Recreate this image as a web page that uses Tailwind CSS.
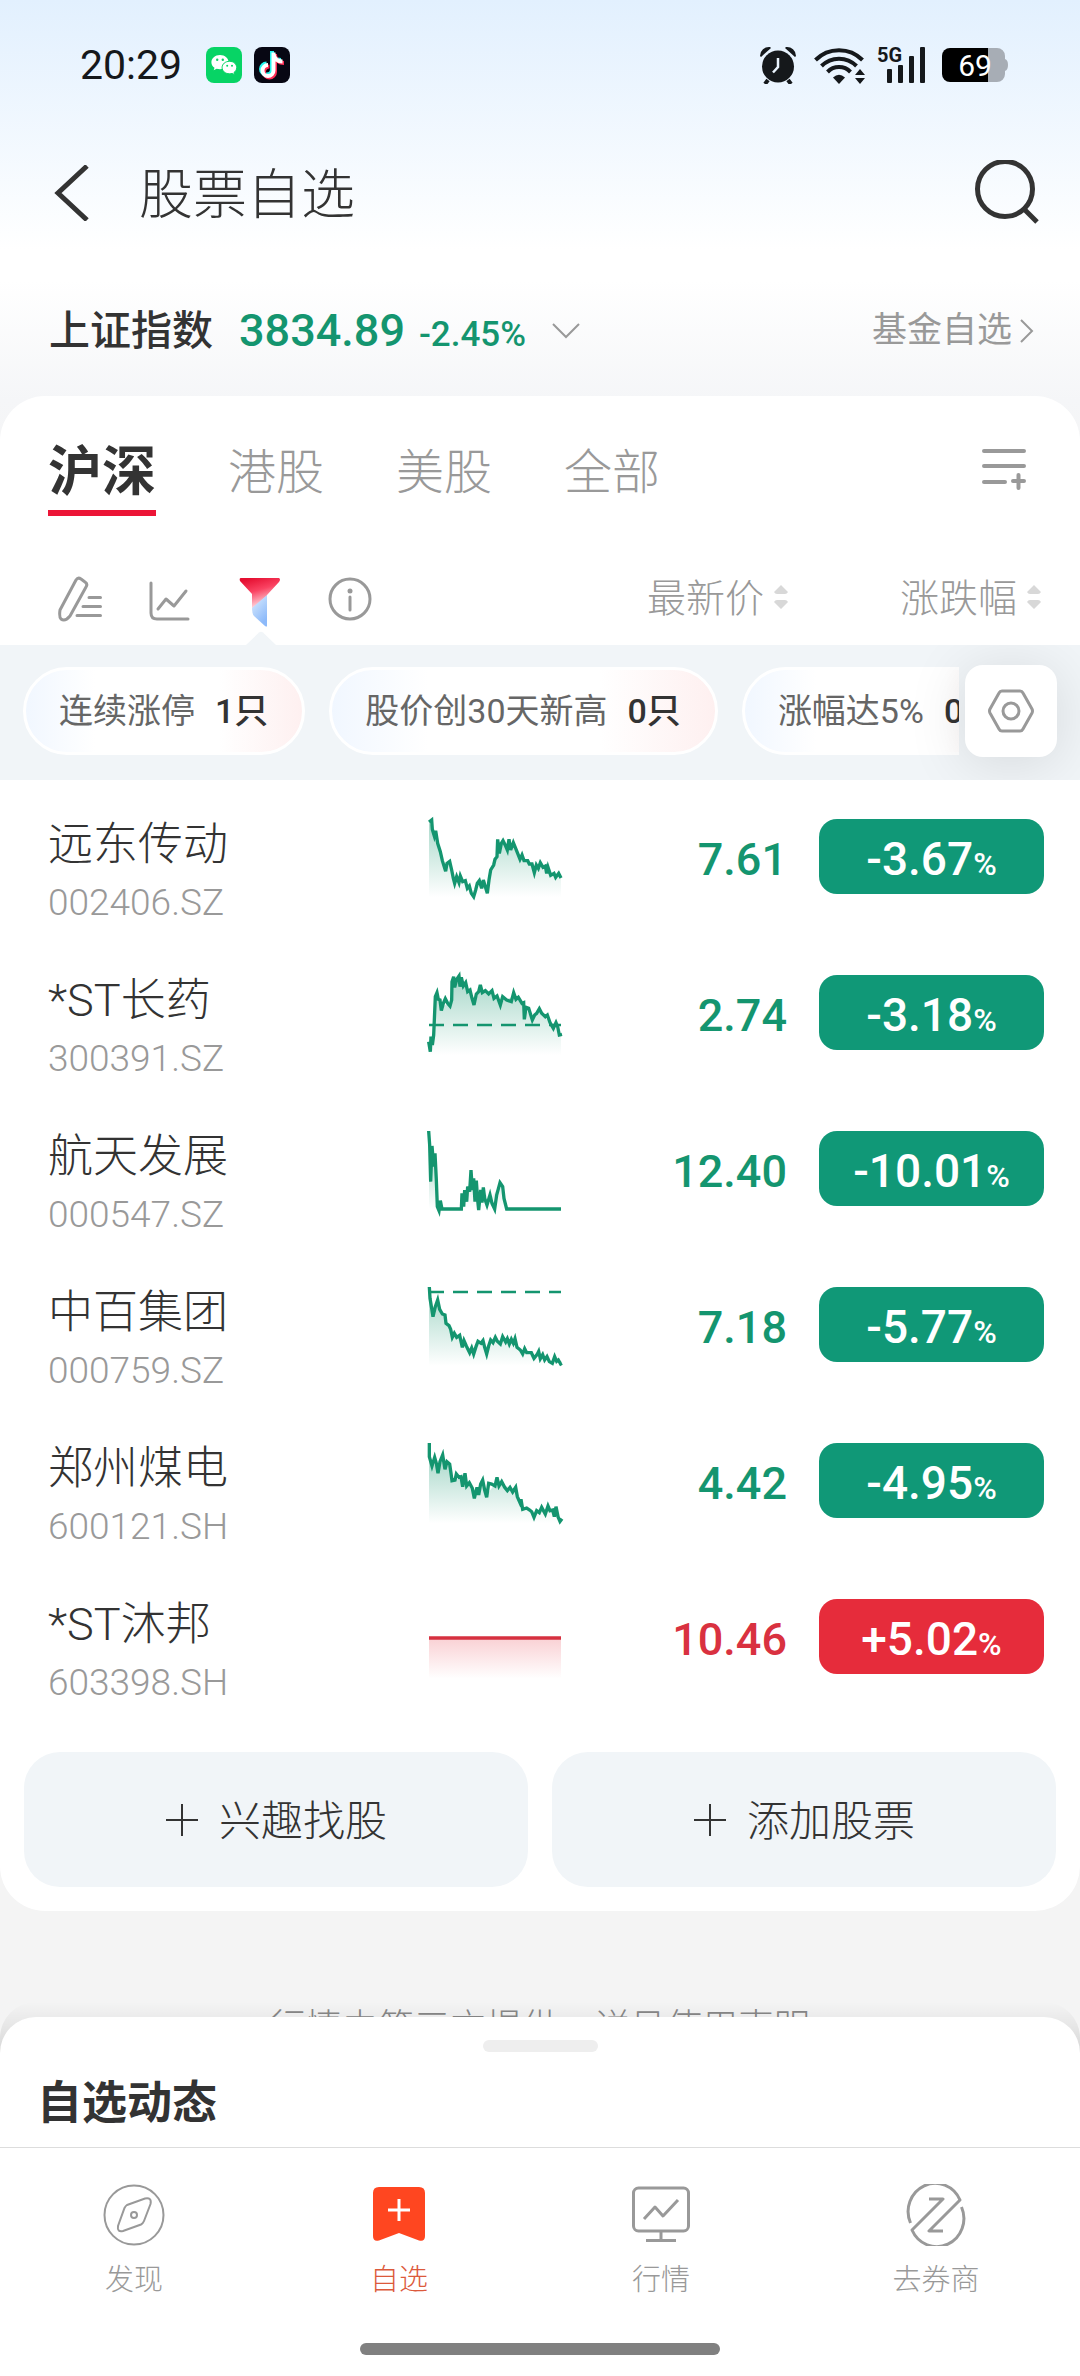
<!DOCTYPE html>
<html lang="zh-CN">
<head>
<meta charset="utf-8">
<meta name="viewport" content="width=device-width, initial-scale=1">
<title>股票自选</title>
<script src="https://cdn.jsdelivr.net/npm/@tailwindcss/browser@4"></script>
</head>
<body class="font-['Roboto','Noto_Sans_CJK_SC',sans-serif] text-[#333] bg-white">
<div class="h-screen flex flex-col overflow-hidden">

  <div class="flex-1 min-h-0 overflow-y-auto [scrollbar-width:none] bg-[linear-gradient(to_bottom,#e2f0fe_0px,#ffffff_250px,#ffffff_280px,#f5f6f8_400px,#f4f4f4_480px)]">

    <!-- Status bar -->
    <div class="h-[130px] flex items-center pl-20 pr-[72px] text-[#15181b]">
      <span class="text-[41px] leading-[48px]">20:29</span>
      <svg class="ml-6 size-9" viewBox="0 0 36 36" aria-hidden="true">
        <rect width="36" height="36" rx="8" fill="#07d465"/>
        <path d="M14 8c-5 0-8.600 3.300-8.600 7.300 0 2.300 1.200 4.200 3.100 5.500l-.8 2.500 2.900-1.500c1.100.3 2.200.5 3.400.5 5 0 8.600-3.100 8.600-7S19 8 14 8z" fill="#fff"/>
        <path d="M23.500 14.300c-4.300 0-7.400 2.800-7.400 6.300 0 3.400 3.100 6.200 7.400 6.200 1 0 1.900-.1 2.700-.4l2.500 1.300-.7-2.200c1.700-1.200 2.700-2.900 2.700-4.900 0-3.500-3-6.300-7.200-6.300z" fill="#fff" stroke="#07d465"/>
        <g fill="#07d465"><circle cx="11.200" cy="12.800" r="1.200"/><circle cx="16.800" cy="12.800" r="1.200"/><circle cx="21.200" cy="18.800" r="1"/><circle cx="26" cy="18.800" r="1"/></g>
      </svg>
      <svg class="ml-3 size-9" viewBox="0 0 36 36" fill="none" stroke-width="4" aria-hidden="true">
        <rect width="36" height="36" rx="8" fill="#070713"/>
        <path d="M19 5v18a5.500 5.500 0 1 1-5.500-5.500M19 6c.5 5 4 8 9 8" stroke="#25f4ee" transform="translate(-1 -1)"/>
        <path d="M19 5v18a5.500 5.500 0 1 1-5.500-5.500M19 6c.5 5 4 8 9 8" stroke="#fe2c55" transform="translate(2 2)"/>
        <path d="M19 5v18a5.500 5.500 0 1 1-5.500-5.500M19 6c.5 5 4 8 9 8" stroke="#fff" transform="translate(.5 .5)"/>
      </svg>
      <svg class="ml-auto w-[38px] h-[38px]" viewBox="0 0 38 38" aria-hidden="true">
        <circle cx="19" cy="20.500" r="16" fill="currentColor"/>
        <path d="M1 10A9 9 0 0 1 11 1L12 2L2 11ZM37 10A9 9 0 0 0 27 1L26 2L36 11Z" fill="currentColor"/>
        <path d="M9 34l-3 4M29 34l3 4" stroke="currentColor" stroke-width="4"/>
        <path d="M19 12v9l-5 5.500" fill="none" stroke="#eaf4fe" stroke-width="2.500"/>
      </svg>
      <svg class="ml-[17px] w-[51px] h-[38px]" viewBox="0 0 51 38" fill="none" stroke="currentColor" stroke-width="4" aria-hidden="true">
        <path d="M1.500 14A33 33 0 0 1 48.500 14M7.500 20A24.500 24.500 0 0 1 42.500 20M13.500 26A16 16 0 0 1 36.500 26"/>
        <path d="M25 38l-6-6.500q6-5.500 12 0z" fill="currentColor" stroke="none"/>
        <path d="M41 29l5-6 5 6zM41 32l5 6 5-6z" fill="currentColor" stroke="none"/>
      </svg>
      <div class="relative ml-3 w-[50px] h-[38px]">
        <span class="absolute left-0 top-0 text-xl leading-[18px] font-bold">5G</span>
        <svg class="w-[50px] h-[38px]" viewBox="0 0 50 38" fill="currentColor" aria-hidden="true">
          <rect x="10" y="23" width="5" height="14" rx="1"/><rect x="21" y="19" width="5" height="18" rx="1"/><rect x="32" y="10" width="5" height="27" rx="1"/><rect x="43" y="1" width="5" height="36" rx="1"/>
        </svg>
      </div>
      <div class="relative ml-[15px] w-[66px] h-[34px]">
        <svg class="w-[66px] h-[34px]" viewBox="0 0 66 34" aria-hidden="true">
          <path d="M46 0h9a8 8 0 0 1 8 8v3q3 1 3 6t-3 6v3a8 8 0 0 1-8 8h-9z" fill="#a7adb5"/>
          <path d="M46 0H8a8 8 0 0 0-8 8v18a8 8 0 0 0 8 8h38z" fill="#000"/>
        </svg>
        <span class="absolute inset-0 text-center text-[30px] leading-[36px] text-white">69</span>
      </div>
    </div>

    <!-- Title bar -->
    <header class="h-[126px] flex items-center pl-[54px] pr-10">
      <button aria-label="返回"><svg class="block w-9 h-14" viewBox="0 0 36 56" fill="none" stroke="#333" stroke-width="5"><path d="M33 1L4 28L33 55"/></svg></button>
      <h1 class="ml-[49px] pt-1.5 text-[54px] leading-[64px] font-light">股票自选</h1>
      <button class="ml-auto" aria-label="搜索"><svg class="block size-[66px]" viewBox="0 0 66 66" fill="none" stroke="#333" stroke-width="5"><circle cx="31" cy="29" r="27.500"/><path d="M49 48L63 62"/></svg></button>
    </header>

    <!-- Index summary -->
    <section class="h-[140px] flex items-center pt-2.5 pl-[49px] pr-[46px]">
      <button class="flex items-center">
        <span class="text-[41px] leading-[50px] font-medium">上证指数</span>
        <span class="ml-[26px] flex items-baseline gap-3.5 pt-1 text-[#14956f] font-medium">
          <span class="text-[45px] leading-[54px]">3834.89</span>
          <span class="text-[35px]">-2.45%</span>
        </span>
        <svg class="ml-[26px] w-7 h-4" viewBox="0 0 28 16" fill="none" stroke="#999" stroke-width="2"><path d="M1 1L14 14L27 1"/></svg>
      </button>
      <a href="#" class="ml-auto flex items-center gap-2 text-[35px] text-[#999]">基金自选
        <svg class="w-[14px] h-6" viewBox="0 0 14 24" fill="none" stroke="#999" stroke-width="2"><path d="M1 1L12 12L1 23"/></svg>
      </a>
    </section>

    <main class="bg-white rounded-[45px] overflow-hidden">
      <!-- Market tabs -->
      <nav class="flex items-end pt-[50px] pl-12 pr-[54px]">
        <div class="flex gap-[72px] text-5xl leading-[54px] font-light text-[#999]">
          <button class="pb-2.5 border-b-6 border-[#ec1537] text-[54px] leading-[54px] font-bold text-[#333]">沪深</button>
          <button class="pb-4 leading-[54px]">港股</button>
          <button class="pb-4 leading-[54px]">美股</button>
          <button class="pb-4 leading-[54px]">全部</button>
        </div>
        <button class="ml-auto pb-[26px]" aria-label="管理分组"><svg class="block w-11 h-[42px]" viewBox="0 0 44 42" fill="none" stroke="#999" stroke-width="4" stroke-linecap="round"><path d="M2 3H42M2 18H42M2 34H23M31 33H42M36.500 27V40"/></svg></button>
      </nav>

      <!-- Toolbar and sort headings -->
      <div class="relative h-[129px] pt-9 pl-14 pr-[39px] flex items-center text-[#999]">
        <div class="flex gap-[42px]">
          <button aria-label="编辑"><svg class="block size-12" viewBox="0 0 48 48" fill="none" stroke="currentColor" stroke-width="3" stroke-linecap="round" stroke-linejoin="round"><path d="M20 5Q22 2 25 4L29 7Q32 9 30 12L14 41Q9 47 5 44Q3 42 4 35Z"/><path d="M33 22.500H44.500M27 31.500H44.500M21 40.500H44.500"/></svg></button>
          <button aria-label="走势"><svg class="block size-12" viewBox="0 0 48 48" fill="none" stroke="currentColor" stroke-width="3" stroke-linecap="round" stroke-linejoin="round"><path d="M5 8V38Q5 44 11 44H42"/><path d="M12 34L20 24L28 31L40 16"/></svg></button>
          <button aria-label="筛选"><svg class="block size-12 overflow-visible" viewBox="0 0 48 48">
            <defs><linearGradient id="fr" x1="0.300" y1="0" x2="0.700" y2="1"><stop offset="0" stop-color="#e50f31"/><stop offset=".4" stop-color="#fa4362"/><stop offset="1" stop-color="#fff"/></linearGradient><linearGradient id="fb" x1="0" y1="0" x2="0.500" y2="1"><stop offset="0" stop-color="#e4f2fe"/><stop offset="1" stop-color="#8dbafa"/></linearGradient></defs>
            <path d="M31 17V51Q31 52 29 51L18 41Q16 39 16 32Z" fill="url(#fb)"/><path d="M5 3H43Q45 4 43 7L31 20L16 33V19L4 6Q3 3 5 3Z" fill="url(#fr)"/></svg></button>
          <button aria-label="说明"><svg class="block size-12" viewBox="0 0 48 48" fill="none" stroke="currentColor" stroke-width="3" stroke-linecap="round"><circle cx="24" cy="24" r="20"/><path d="M24 22V35"/><circle cx="24" cy="16" r="2.500" fill="currentColor" stroke="none"/></svg></button>
        </div>
        <div class="ml-auto flex gap-[112px] text-[39px] leading-[46px] font-light">
          <button class="flex items-center gap-2.5">最新价<svg class="mb-1 w-[14px] h-6" viewBox="0 0 14 24" fill="#d8d8d8"><path d="M7 0L14 7Q13 9 11 9H3Q1 9 0 7ZM7 24L14 17Q13 15 11 15H3Q1 15 0 17Z"/></svg></button>
          <button class="flex items-center gap-2.5">涨跌幅<svg class="mb-1 w-[14px] h-6" viewBox="0 0 14 24" fill="#d8d8d8"><path d="M7 0L14 7Q13 9 11 9H3Q1 9 0 7ZM7 24L14 17Q13 15 11 15H3Q1 15 0 17Z"/></svg></button>
        </div>
        <svg class="absolute left-[246px] bottom-0 w-[30px] h-[14px]" viewBox="0 0 30 14" fill="#f1f5f8" aria-hidden="true"><path d="M0 14L13 1.500Q15 0 17 1.500L30 14Z"/></svg>
      </div>

      <!-- Quick filters -->
      <div class="h-[135px] bg-[#f1f5f8] overflow-hidden flex items-center pb-[3px] pl-[23px] pr-[23px] gap-[6px]">
        <div class="flex-1 min-w-0 overflow-hidden flex gap-6 text-[34px] leading-[42px] text-[#666]">
          <button class="shrink-0 h-[88px] rounded-full border-3 border-white pl-[33px] pr-[34px] flex items-center gap-5 bg-[linear-gradient(to_right,#f1f7ff,#ffffff_25%,#ffffff_70%,#fef0f0)]">连续涨停<b class="font-medium text-[#333]">1只</b></button>
          <button class="shrink-0 h-[88px] rounded-full border-3 border-white pl-[33px] pr-[34px] flex items-center gap-5 bg-[linear-gradient(to_right,#f1f7ff,#ffffff_25%,#ffffff_70%,#fef0f0)]">股价创30天新高<b class="font-medium text-[#333]">0只</b></button>
          <button class="shrink-0 h-[88px] rounded-full border-3 border-white pl-[33px] pr-[34px] flex items-center gap-5 bg-[linear-gradient(to_right,#f1f7ff,#ffffff_25%,#ffffff_70%,#fef0f0)]">涨幅达5%<b class="font-medium text-[#333]">0只</b></button>
        </div>
        <button class="relative shrink-0 size-[92px] rounded-[18px] bg-white shadow-[0_6px_60px_rgba(0,0,0,0.12)] flex items-center justify-center" aria-label="筛选设置">
          <svg class="size-12" viewBox="0 0 48 48" fill="none" stroke="#999" stroke-width="3" stroke-linejoin="round"><path d="M15 4H33Q35 4 36 6L45 22Q46 24 45 26L36 42Q35 44 33 44H15Q13 44 12 42L3 26Q2 24 3 22L12 6Q13 4 15 4Z"/><circle cx="24" cy="24" r="8"/></svg>
        </button>
      </div>

      <!-- Watchlist -->
      <svg class="absolute size-0" aria-hidden="true"><defs>
        <linearGradient id="gg" x1="0" y1="0" x2="0" y2="1"><stop offset="0" stop-color="#14956f" stop-opacity=".36"/><stop offset="1" stop-color="#14956f" stop-opacity="0"/></linearGradient>
        <linearGradient id="gr" x1="0" y1="0" x2="0" y2="1"><stop offset="0" stop-color="#e62c3b" stop-opacity=".22"/><stop offset="1" stop-color="#e62c3b" stop-opacity="0"/></linearGradient>
      </defs></svg>
      <table class="w-full table-fixed border-collapse" aria-label="沪深自选">
        <colgroup><col><col class="w-[132px]"><col class="w-[226px]"><col class="w-[293px]"></colgroup>
        <tbody>
          <tr class="h-[156px]">
            <th scope="row" class="pl-12 pt-8 text-left font-light"><span class="block text-[45px] leading-[54px]">远东传动</span><span class="block mt-1 text-[37px] leading-[54px] text-[#999]">002406.SZ</span></th>
            <td><svg class="block w-[132px] h-[78px] overflow-visible" viewBox="87 87 396 234"><path fill="url(#gg)" d="M87 95L105 125L120 185L137 240L148 215L163 270L178 262L200 285L220 318L235 275L262 305L275 235L290 200L295 155L320 165L345 165L365 208L400 230L420 222L450 245L483 262V321H87Z"/><path fill="none" stroke="#14956f" stroke-width="10" d="M87 96L95 90L97 118L103 138L107 122L113 160L121 185L127 212L137 244L141 220L149 214L155 240L160 265L164 280L170 260L177 278L181 258L188 275L196 272L202 295L208 288L214 310L221 320L227 300L232 280L238 272L245 295L250 270L256 290L262 310L267 270L272 240L281 225L285 208L291 200L293 148L298 190L304 160L309 152L317 168L322 180L327 148L332 180L340 158L347 175L353 190L360 208L366 195L372 212L383 212L388 222L396 222L403 248L409 225L415 235L421 218L429 232L436 228L440 250L444 232L452 256L462 250L467 262L476 250L483 264"/></svg></td>
            <td class="pt-1 text-right text-[45px] font-medium text-[#14956f]">7.61</td>
            <td class="pl-8 pr-9 pb-[3px]"><span class="flex h-[75px] items-baseline justify-center rounded-[18px] bg-[#109877] text-[46px] leading-[80px] font-medium text-white">-3.67<span class="text-[32px]">%</span></span></td>
          </tr>
          <tr class="h-[156px]">
            <th scope="row" class="pl-12 pt-8 text-left font-light"><span class="block text-[45px] leading-[54px]">*ST长药</span><span class="block mt-1 text-[37px] leading-[54px] text-[#999]">300391.SZ</span></th>
            <td><svg class="block w-[132px] h-[78px] overflow-visible" viewBox="87 555 396 234"><path fill="url(#gg)" d="M87 740L103 735L108 610L125 650L150 640L160 570L180 570L205 600L222 640L240 600L275 605L300 635L340 620L365 640L395 685L420 665L455 705L483 735V795H87Z"/><path stroke="#14956f" stroke-width="8" stroke-dasharray="45 27" d="M87 705H483"/><path fill="none" stroke="#14956f" stroke-width="10" d="M86 755L91 785L93 740L97 765L101 735L103 690L106 620L111 608L115 628L120 630L124 662L130 640L136 626L143 640L150 648L155 630L156 575L161 560L164 592L170 568L177 558L180 590L184 562L190 588L197 578L203 605L210 600L216 625L222 645L229 612L236 605L241 585L247 608L256 602L266 612L276 602L282 625L291 618L301 645L308 620L320 630L334 635L341 608L348 628L355 622L366 640L371 638L373 688L378 652L386 655L397 690L404 675L410 670L418 656L425 670L436 680L442 675L450 698L460 715L468 698L473 710L478 735L486 733"/></svg></td>
            <td class="pt-1 text-right text-[45px] font-medium text-[#14956f]">2.74</td>
            <td class="pl-8 pr-9 pb-[3px]"><span class="flex h-[75px] items-baseline justify-center rounded-[18px] bg-[#109877] text-[46px] leading-[80px] font-medium text-white">-3.18<span class="text-[32px]">%</span></span></td>
          </tr>
          <tr class="h-[156px]">
            <th scope="row" class="pl-12 pt-8 text-left font-light"><span class="block text-[45px] leading-[54px]">航天发展</span><span class="block mt-1 text-[37px] leading-[54px] text-[#999]">000547.SZ</span></th>
            <td><svg class="block w-[132px] h-[78px] overflow-visible" viewBox="87 1023 396 234"><path fill="url(#gg)" d="M87 1080L105 1120L112 1257H87ZM185 1257L213 1160L235 1240L250 1200L270 1230L300 1185L318 1257Z"/><path fill="none" stroke="#14956f" stroke-width="10" d="M86 1023L89 1065L92 1175L96 1068L101 1130L105 1090L109 1170L112 1250L117 1262L121 1232L126 1257H184L186 1210L191 1250L194 1200L200 1235L203 1190L209 1205L213 1140L217 1200L221 1165L225 1235L229 1172L233 1230L236 1260L242 1200L246 1238L250 1192L254 1225L261 1245L270 1215L276 1240L284 1257L290 1215L300 1178L308 1190L312 1225L320 1257H483"/></svg></td>
            <td class="pt-1 text-right text-[45px] font-medium text-[#14956f]">12.40</td>
            <td class="pl-8 pr-9 pb-[3px]"><span class="flex h-[75px] items-baseline justify-center rounded-[18px] bg-[#109877] text-[46px] leading-[80px] font-medium text-white">-10.01<span class="text-[32px]">%</span></span></td>
          </tr>
          <tr class="h-[156px]">
            <th scope="row" class="pl-12 pt-8 text-left font-light"><span class="block text-[45px] leading-[54px]">中百集团</span><span class="block mt-1 text-[37px] leading-[54px] text-[#999]">000759.SZ</span></th>
            <td><svg class="block w-[132px] h-[78px] overflow-visible" viewBox="87 81 396 234"><path fill="url(#gg)" d="M87 100L99 165L113 125L135 175L157 228L180 235L210 275L245 245L260 275L285 240L340 245L365 275L400 290L440 298L483 310V318H87Z"/><path stroke="#14956f" stroke-width="8" stroke-dasharray="45 27" d="M87 96H483"/><path fill="none" stroke="#14956f" stroke-width="10" d="M88 81L90 115L95 145L99 170L106 140L113 120L119 148L127 162L135 165L138 190L147 197L152 208L157 232L163 220L170 232L179 226L187 262L192 242L199 258L209 278L215 264L221 282L228 260L234 244L243 250L249 242L254 262L260 282L266 258L272 240L279 248L286 232L292 244L301 252L308 230L317 246L322 236L328 252L334 238L340 250L345 236L351 262L361 270L368 282L374 266L380 278L394 278L402 295L411 284L416 274L421 296L428 284L434 300L441 290L448 305L457 310L464 290L470 304L475 300L482 312L486 310"/></svg></td>
            <td class="pt-1 text-right text-[45px] font-medium text-[#14956f]">7.18</td>
            <td class="pl-8 pr-9 pb-[3px]"><span class="flex h-[75px] items-baseline justify-center rounded-[18px] bg-[#109877] text-[46px] leading-[80px] font-medium text-white">-5.77<span class="text-[32px]">%</span></span></td>
          </tr>
          <tr class="h-[156px]">
            <th scope="row" class="pl-12 pt-8 text-left font-light"><span class="block text-[45px] leading-[54px]">郑州煤电</span><span class="block mt-1 text-[37px] leading-[54px] text-[#999]">600121.SH</span></th>
            <td><svg class="block w-[132px] h-[78px] overflow-visible" viewBox="87 549 396 234"><path fill="url(#gg)" d="M87 590L112 625L128 600L150 620L155 660L195 655L222 700L245 670L260 705L290 665L345 690L370 745L400 765L445 745L483 780V790H87Z"/><path fill="none" stroke="#14956f" stroke-width="10" d="M88 549V590L96 618L104 592L109 610L114 640L120 605L128 585L135 628L141 605L149 612L153 640L156 662L165 660L169 642L177 652L183 650L188 680L195 640L200 678L208 668L217 685L223 715L231 682L236 705L242 672L248 660L254 690L260 712L266 670L275 672L285 678L291 652L297 678L305 665L314 682L322 692L330 682L338 696L347 682L352 710L360 728L363 718L368 748L380 744L389 750L395 755L402 772L410 752L418 758L425 742L436 762L444 738L450 752L458 750L463 770L468 740L474 770L480 784L486 776"/></svg></td>
            <td class="pt-1 text-right text-[45px] font-medium text-[#14956f]">4.42</td>
            <td class="pl-8 pr-9 pb-[3px]"><span class="flex h-[75px] items-baseline justify-center rounded-[18px] bg-[#109877] text-[46px] leading-[80px] font-medium text-white">-4.95<span class="text-[32px]">%</span></span></td>
          </tr>
          <tr class="h-[156px]">
            <th scope="row" class="pl-12 pt-8 text-left font-light"><span class="block text-[45px] leading-[54px]">*ST沐邦</span><span class="block mt-1 text-[37px] leading-[54px] text-[#999]">603398.SH</span></th>
            <td><svg class="block w-[132px] h-[78px] overflow-visible" viewBox="87 1017 396 234"><rect x="87" y="1134" width="396" height="122" fill="url(#gr)"/><path stroke="#d6303f" stroke-width="10" d="M87 1134H483"/></svg></td>
            <td class="pt-1 text-right text-[45px] font-medium text-[#d93140]">10.46</td>
            <td class="pl-8 pr-9 pb-[3px]"><span class="flex h-[75px] items-baseline justify-center rounded-[18px] bg-[#e62c3b] text-[46px] leading-[80px] font-medium text-white">+5.02<span class="text-[32px]">%</span></span></td>
          </tr>
        </tbody>
      </table>

      <div class="grid grid-cols-2 gap-6 px-6 pt-9 pb-6 text-[42px] leading-[50px] font-light">
        <button class="h-[135px] rounded-[36px] bg-[#f1f5f8] flex items-center justify-center gap-5"><svg class="size-[34px]" viewBox="0 0 34 34" stroke="#333" stroke-width="2"><path d="M17 1V33M1 17H33"/></svg><span class="pt-1">兴趣找股</span></button>
        <button class="h-[135px] rounded-[36px] bg-[#f1f5f8] flex items-center justify-center gap-5"><svg class="size-[34px]" viewBox="0 0 34 34" stroke="#333" stroke-width="2"><path d="M17 1V33M1 17H33"/></svg><span class="pt-1">添加股票</span></button>
      </div>
    </main>

    <p class="bg-[#f4f4f4] pt-[99px] pb-12 text-center text-4xl leading-9 font-light text-[#888]">行情由第三方提供，详见使用声明</p>
  </div>

  <!-- News sheet and bottom navigation -->
  <div class="relative shrink-0 -mt-10">
    <div class="absolute inset-x-0 -top-[15px] h-[60px] rounded-t-[36px] bg-[linear-gradient(to_bottom,rgba(0,0,0,0),rgba(0,0,0,0.14))]"></div>
    <section class="relative h-[130px] bg-white rounded-t-[36px] pt-[23px]">
      <div class="mx-auto w-[115px] h-3 rounded-full bg-[#eee]"></div>
      <h2 class="mt-[25px] pl-[37px] text-[45px] leading-[54px] font-bold">自选动态</h2>
    </section>
    <nav class="relative h-[196px] bg-white border-t border-[#ddd] pt-9 grid grid-cols-[268fr_262fr_262fr_288fr] text-[29px] leading-9 font-light text-[#999]">
      <a href="#" class="flex flex-col items-center gap-4">
        <svg class="w-[62px] h-[62px]" viewBox="0 0 62 62" fill="none" stroke="#999" stroke-width="2"><circle cx="31" cy="31" r="29.500"/><path d="M24 21L42 14.500Q49 13 47.500 20L41 37Q40 39.500 38 40.500L20 47Q14 48.500 15 42L21.500 24Q22.500 22 24 21Z"/><circle cx="31" cy="31" r="3"/></svg>
        发现
      </a>
      <a href="#" class="flex flex-col items-center gap-4 text-[#dc5a3c]" aria-current="page">
        <svg class="w-[62px] h-[62px]" viewBox="0 0 62 62"><path d="M11 3H51Q57 3 57 9V52Q57 58 51 56.500L31 49L11 56.500Q5 58 5 52V9Q5 3 11 3Z" fill="#ff4620"/><path d="M31 15V37M20 26H42" stroke="#fff" stroke-width="3"/></svg>
        自选
      </a>
      <a href="#" class="flex flex-col items-center gap-4">
        <svg class="w-[62px] h-[62px]" viewBox="0 0 62 62" fill="none" stroke="#999" stroke-width="3" stroke-linejoin="round"><rect x="3.500" y="4" width="55" height="43" rx="5"/><path d="M31 47V56M16 56.500H46M14 35L25 23L33 32L48 16"/></svg>
        行情
      </a>
      <a href="#" class="flex flex-col items-center gap-4">
        <svg class="w-[62px] h-[62px]" viewBox="0 0 62 62" fill="none" stroke="#999" stroke-width="3" stroke-linejoin="round"><path d="M5.500 39A27 28 0 0 1 55 16L24 47H38"/><path d="M56.500 23A27 28 0 0 1 7 46L38 15H24"/></svg>
        去券商
      </a>
    </nav>
    <div class="relative h-[33px] bg-white"><div class="mx-auto w-[360px] h-3 rounded-full bg-[#808080]"></div></div>
  </div>
</div>
</body>
</html>
